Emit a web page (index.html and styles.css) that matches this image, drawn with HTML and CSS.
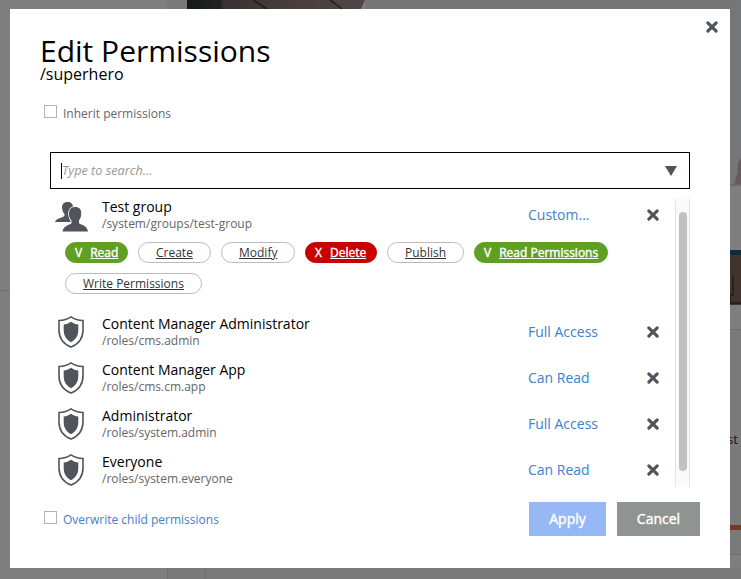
FILE: index.html
```html
<!DOCTYPE html>
<html lang="en">
<head>
<meta charset="utf-8">
<title>Edit Permissions</title>
<link rel="stylesheet" href="styles.css">
</head>
<body>
<svg width="0" height="0" class="defs">
  <symbol id="x" viewBox="-.5 -.5 13 13"><path d="M2.100 2.100 9.900 9.900M9.900 2.100 2.100 9.900" stroke="#4f545a" stroke-width="2.900" stroke-linecap="round"/></symbol>
  <symbol id="shield" viewBox="0 0 26 32"><path d="M13 .9C9.500 3.200 5.500 4.300 1 4.500V14C1 22 5.500 28 13 31.100C20.500 28 25 22 25 14V4.500C20.500 4.300 16.500 3.200 13 .9Z" fill="#fff" stroke="#50555b" stroke-width="1.600"/><path d="M13 5.800C10.500 7.500 8.300 8.300 5.700 8.600V14C5.700 19.500 8.300 23.800 13 26.300C17.700 23.800 20.300 19.500 20.300 14V8.600C17.700 8.300 15.500 7.500 13 5.800Z" fill="#50555b"/></symbol>
</svg>
<svg class="backdrop" width="741" height="579">
  <defs><linearGradient id="roof"><stop offset="0" stop-color="#151b19"/><stop offset=".19" stop-color="#202321"/><stop offset=".2" stop-color="#39302f"/><stop offset=".65" stop-color="#4a3f3e"/><stop offset="1" stop-color="#504746"/></linearGradient></defs>
  <rect width="741" height="579" fill="#7f7f7f"/>
  <rect x="167" width="20" height="9" fill="#797979"/>
  <path d="M187 0H365L361 9H187Z" fill="url(#roof)"/>
  <path d="M253 0 267 9M330 0 342 9" stroke="#211d1c" stroke-width="1.500"/>
  <rect x="365" width="376" height="9" fill="#757576"/>
  <rect x="730" width="11" height="185" fill="#757678"/>
  <path d="M741 158C735 164 740 171 736 177L734 185H741Z" fill="#68595a"/>
  <rect x="730" y="184" width="11" height="2" fill="#6b6b6c"/>
  <rect x="730" y="250" width="11" height="5" fill="#102b3a"/>
  <rect x="730" y="255" width="11" height="50" fill="#42332f"/>
  <path d="M733 275V295H730V303H741" stroke="#24211e" stroke-width="2" fill="none"/>
  <path d="M0 290.500H10M730 329.500H741M730 554.500H741" stroke="#6e6e6e"/>
  <rect x="730" y="330" width="11" height="224" fill="#7a7a7a"/>
  <rect x="730" y="525" width="11" height="5" fill="#813329"/>
  <text x="727" y="444" class="peek">st</text>
  <rect x="167" y="568" width="39" height="11" fill="#797979"/>
  <path d="M167.500 568V579M205.500 568V579" stroke="#707070"/>
  <rect x="206" y="568" width="535" height="11" fill="#7a7a7a"/>
</svg>
<main class="dialog">
  <svg class="close" width="14" height="14"><use href="#x"/></svg>
  <h1>Edit Permissions</h1>
  <p class="subtitle">/superhero</p>
  <label class="check inherit"><span class="box"></span>Inherit permissions</label>
  <div class="search"><span class="caret"></span><span class="hint">Type to search...</span><svg width="12" height="10"><path d="M0 0H12L6 10Z" fill="#4f545a"/></svg></div>
  <div class="list">
    <div class="entries">
      <section class="row group">
        <svg class="icon people" width="33" height="31" viewBox="0 0 33 31"><g fill="#50555b"><path d="M7 7C7 3 9 1 12.500 1C16 1 18 3 18 6L17 13L14 17L16 21L0 21C1 18 4 17.500 8 16Q10 15 9.500 13Q7.500 11 7 7Z"/><path d="M14 13C14 8 16 6 20 6C24.500 6 26.500 8.500 26.200 13C26.200 16 25 18 24 19.500Q23.500 22 25 23C29 24.500 32 25.500 33 30.500H7.500C8.500 25.500 12 24.500 15.500 23Q17 22 16.500 19.500C15 18 14 16 14 13Z" stroke="#fff" stroke-width="1.600" paint-order="stroke"/></g></svg>
        <div class="who"><div class="name">Test group</div><div class="path">/system/groups/test-group</div></div>
        <span class="access">Custom...</span><svg class="remove" width="14" height="14"><use href="#x"/></svg>
      </section>
      <div class="chips">
        <span class="chip allow"><b>V</b><u>Read</u></span><span class="chip create"><u>Create</u></span><span class="chip modify"><u>Modify</u></span><span class="chip deny"><b>X</b><u>Delete</u></span><span class="chip publish"><u>Publish</u></span><span class="chip allow wide"><b>V</b><u>Read Permissions</u></span><span class="chip"><u>Write Permissions</u></span>
      </div>
      <section class="row"><svg class="icon shield" width="26" height="32"><use href="#shield"/></svg><div class="who"><div class="name">Content Manager Administrator</div><div class="path">/roles/cms.admin</div></div><span class="access">Full Access</span><svg class="remove" width="14" height="14"><use href="#x"/></svg></section>
      <section class="row"><svg class="icon shield" width="26" height="32"><use href="#shield"/></svg><div class="who"><div class="name">Content Manager App</div><div class="path">/roles/cms.cm.app</div></div><span class="access">Can Read</span><svg class="remove" width="14" height="14"><use href="#x"/></svg></section>
      <section class="row"><svg class="icon shield" width="26" height="32"><use href="#shield"/></svg><div class="who"><div class="name">Administrator</div><div class="path">/roles/system.admin</div></div><span class="access">Full Access</span><svg class="remove" width="14" height="14"><use href="#x"/></svg></section>
      <section class="row"><svg class="icon shield" width="26" height="32"><use href="#shield"/></svg><div class="who"><div class="name">Everyone</div><div class="path">/roles/system.everyone</div></div><span class="access">Can Read</span><svg class="remove" width="14" height="14"><use href="#x"/></svg></section>
    </div>
    <div class="track"><div class="thumb"></div></div>
  </div>
  <footer>
    <label class="check overwrite"><span class="box"></span>Overwrite child permissions</label>
    <button class="apply">Apply</button><button class="cancel">Cancel</button>
  </footer>
</main>
</body>
</html>
```
FILE: styles.css
```css
* { box-sizing: border-box; }
body { margin: 0; height: 579px; overflow: hidden; padding: 9px 11px 11px 10px; font-family: "Open Sans", sans-serif; background: #7f7f7f; }
svg { display: block; flex: none; }
.defs { position: absolute; }
.backdrop { position: absolute; left: 0; top: 0; }
.peek { font-size: 13px; fill: #151515; }
.dialog { position: relative; height: 559px; background: #fff; padding: 24px 30px 0; display: flex; flex-direction: column; }
.close { position: absolute; right: 11px; top: 11px; }
h1 { margin: 0; font-size: 30px; font-weight: 400; line-height: 36px; height: 32px; }
.subtitle { margin: 0; font-size: 16px; line-height: 18px; height: 20px; }
.check { display: flex; align-items: center; font-size: 12px; line-height: 18px; gap: 6px; padding-left: 4px; color: #666; }
.box { width: 13px; height: 13px; border: 1px solid #b4b4b4; margin-top: -5px; }
.inherit { margin-top: 20px; height: 18px; }
.search { margin: 29px 0 0 10px; width: 640px; height: 37px; border: 1px solid #000; display: flex; align-items: center; padding: 0 12px 0 10px; }
.caret { width: 1px; height: 16px; background: #000; }
.hint { flex: 1; font-size: 12.7px; font-style: italic; color: #999; padding-bottom: 2px; }
.list { display: flex; height: 288px; margin: 10px 0 0 15px; }
.entries { width: 620px; }
.row { display: flex; height: 46px; }
.row.group { height: 43px; }
.icon { margin: 0 18px 0 3px; }
.people { margin: 2px 14px 0 0; }
.who { width: 426px; }
.name { font-size: 14px; line-height: 16px; }
.path { font-size: 12px; line-height: 17px; color: #666; }
.access { width: 117px; font-size: 14px; line-height: 32px; color: #4180cb; }
.remove { margin: 9px 0 0 1px; }
.chips { display: flex; flex-wrap: wrap; gap: 10px; padding-left: 10px; height: 74px; align-content: flex-start; }
.chip { height: 21px; border: 1px solid #bbb; border-radius: 11px; padding: 0 17px; font-size: 12px; line-height: 19px; color: #333; white-space: nowrap; }
.chip b { font-weight: 400; margin-right: 8px; }
.chip u { text-underline-offset: 1px; }
.create { width: 73px; }
.modify { width: 74px; }
.publish { width: 77px; }
.allow, .deny { color: #fff; padding: 0 9px; -webkit-text-stroke: .4px #fff; }
.allow { width: 63px; background: #5f9f22; border-color: #5f9f22; }
.wide { width: 134px; }
.deny { width: 72px; background: #c90000; border-color: #c90000; }
.track { width: 15px; height: 288px; border: solid #e5e5e5; border-width: 0 1px; background: #fafafa; padding: 13px 3px 0; }
.thumb { width: 8px; height: 259px; border-radius: 4px; background: #c1c1c1; }
footer { display: flex; margin-top: 15px; height: 34px; }
.overwrite { color: #4180cb; width: 489px; height: 34px; padding-top: 2px; }
button { height: 34px; border: 0; padding: 0 0 2px; font: 400 14px "Open Sans", sans-serif; color: #fff; -webkit-text-stroke: .4px #fff; }
.apply { width: 77px; background: #96b9f5; }
.cancel { width: 83px; margin-left: 11px; background: #909491; }
```
